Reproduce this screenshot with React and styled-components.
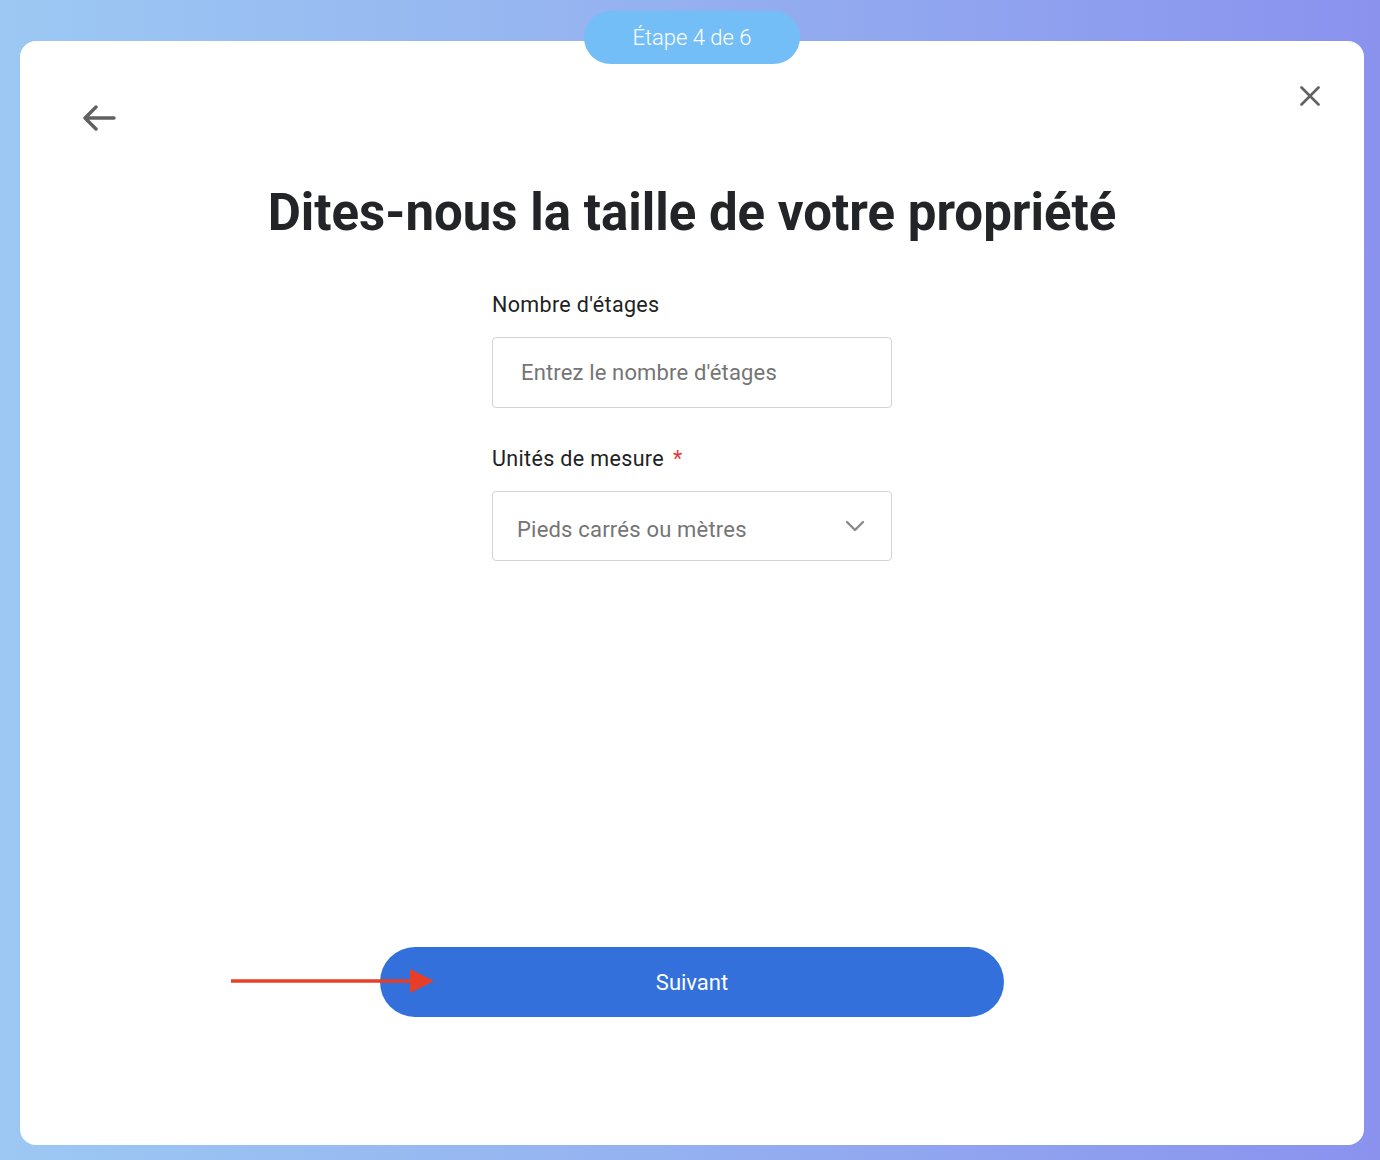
import React from 'react';
import styled, { createGlobalStyle } from 'styled-components';

const GlobalStyle = createGlobalStyle`
    html, body {
        margin: 0;
        padding: 0;
    }
    body {
        font-family: Roboto, "Liberation Sans", sans-serif;
        background: linear-gradient(90deg, #9cc8f3 0%, #94b0f0 50%, #8a92ee 100%);
        min-height: 1160px;
    }
`;

const Page = styled.div`
    position: relative;
    height: 1160px;
    box-sizing: border-box;
    padding: 41px 16px 15px 20px;
    display: flex;
`;

const Card = styled.div`
    flex: 1;
    background: #ffffff;
    border-radius: 16px;
    display: flex;
    flex-direction: column;
    align-items: center;
    position: relative;
`;

const StepPill = styled.div`
    position: absolute;
    top: 11px;
    left: 584px;
    width: 216px;
    height: 53px;
    border-radius: 27px;
    background: #74bef8;
    color: #ffffff;
    font-size: 22px;
    font-weight: 300;
    display: flex;
    align-items: center;
    justify-content: center;
    z-index: 2;
`;

const TopBar = styled.div`
    align-self: stretch;
    display: flex;
    justify-content: space-between;
    padding: 40px 44px 0 62px;
    height: 50px;
`;

const IconButton = styled.button`
    background: none;
    border: none;
    padding: 0;
    cursor: pointer;
    display: flex;
    margin-top: ${(p) => p.offset || 0}px;
    height: fit-content;
`;

const Title = styled.h1`
    margin: 52px 0 0;
    font-size: 51px;
    line-height: 60px;
    font-weight: 700;
    color: #232427;
`;

const Form = styled.div`
    width: 400px;
    margin-top: 49px;
    display: flex;
    flex-direction: column;
`;

const Label = styled.label`
    font-size: 21.5px;
    line-height: 26px;
    letter-spacing: 0.35px;
    color: #222;
    margin-bottom: 19px;
    display: flex;
    gap: 9px;
`;

const Required = styled.span`
    color: #e33a3a;
`;

const Input = styled.input`
    box-sizing: border-box;
    width: 400px;
    height: 71px;
    border: 1px solid #d4d4d4;
    border-radius: 4px;
    padding: 0 28px;
    font-family: inherit;
    font-size: 22px;
    letter-spacing: 0.15px;
    color: #333;
    margin-bottom: 38px;
    &::placeholder {
        color: #757575;
    }
`;

const Select = styled.div`
    box-sizing: border-box;
    width: 400px;
    height: 70px;
    border: 1px solid #d4d4d4;
    border-radius: 4px;
    padding: 0 26px 0 24px;
    display: flex;
    align-items: center;
    justify-content: space-between;
    font-size: 22px;
    color: #757575;
    letter-spacing: 0.2px;
`;

const SelectValue = styled.span`
    padding-top: 6px;
`;

const Spacer = styled.div`
    flex: 1;
`;

const ButtonRow = styled.div`
    position: relative;
    margin-bottom: 128px;
`;

const NextButton = styled.button`
    width: 624px;
    height: 70px;
    border: none;
    border-radius: 35px;
    background: #3370db;
    color: #ffffff;
    font-family: inherit;
    font-size: 22px;
    cursor: pointer;
`;

const Pointer = styled.svg`
    position: absolute;
    left: -149px;
    top: 22px;
`;

export default function App() {
    return (
        <Page>
            <GlobalStyle />
            <StepPill>Étape 4 de 6</StepPill>
            <Card>
                <TopBar>
                    <IconButton offset={24}>
                        <svg width="34" height="26" viewBox="0 0 34 26">
                            <path d="M32 13H4M14 2L3 13l11 11" fill="none" stroke="#616161" strokeWidth="3.4" strokeLinecap="round" strokeLinejoin="round" />
                        </svg>
                    </IconButton>
                    <IconButton offset={5}>
                        <svg width="20" height="20" viewBox="0 0 20 20">
                            <path d="M1.5 1.5l17 17M18.5 1.5l-17 17" fill="none" stroke="#616161" strokeWidth="2.6" strokeLinecap="round" />
                        </svg>
                    </IconButton>
                </TopBar>
                <Title>Dites-nous la taille de votre propriété</Title>
                <Form>
                    <Label>Nombre d'étages</Label>
                    <Input placeholder="Entrez le nombre d'étages" />
                    <Label>Unités de mesure <Required>*</Required></Label>
                    <Select>
                        <SelectValue>Pieds carrés ou mètres</SelectValue>
                        <svg width="20" height="12" viewBox="0 0 20 12">
                            <path d="M2 2l8 8 8-8" fill="none" stroke="#8a8a8a" strokeWidth="2.4" strokeLinecap="round" strokeLinejoin="round" />
                        </svg>
                    </Select>
                </Form>
                <Spacer />
                <ButtonRow>
                    <NextButton>Suivant</NextButton>
                    <Pointer width="205" height="26" viewBox="0 0 205 26">
                        <line x1="0" y1="12" x2="184" y2="12" stroke="#e63e27" strokeWidth="3.5" />
                        <polygon points="179,0 203,12 179,24" fill="#e63e27" />
                    </Pointer>
                </ButtonRow>
            </Card>
        </Page>
    );
}
